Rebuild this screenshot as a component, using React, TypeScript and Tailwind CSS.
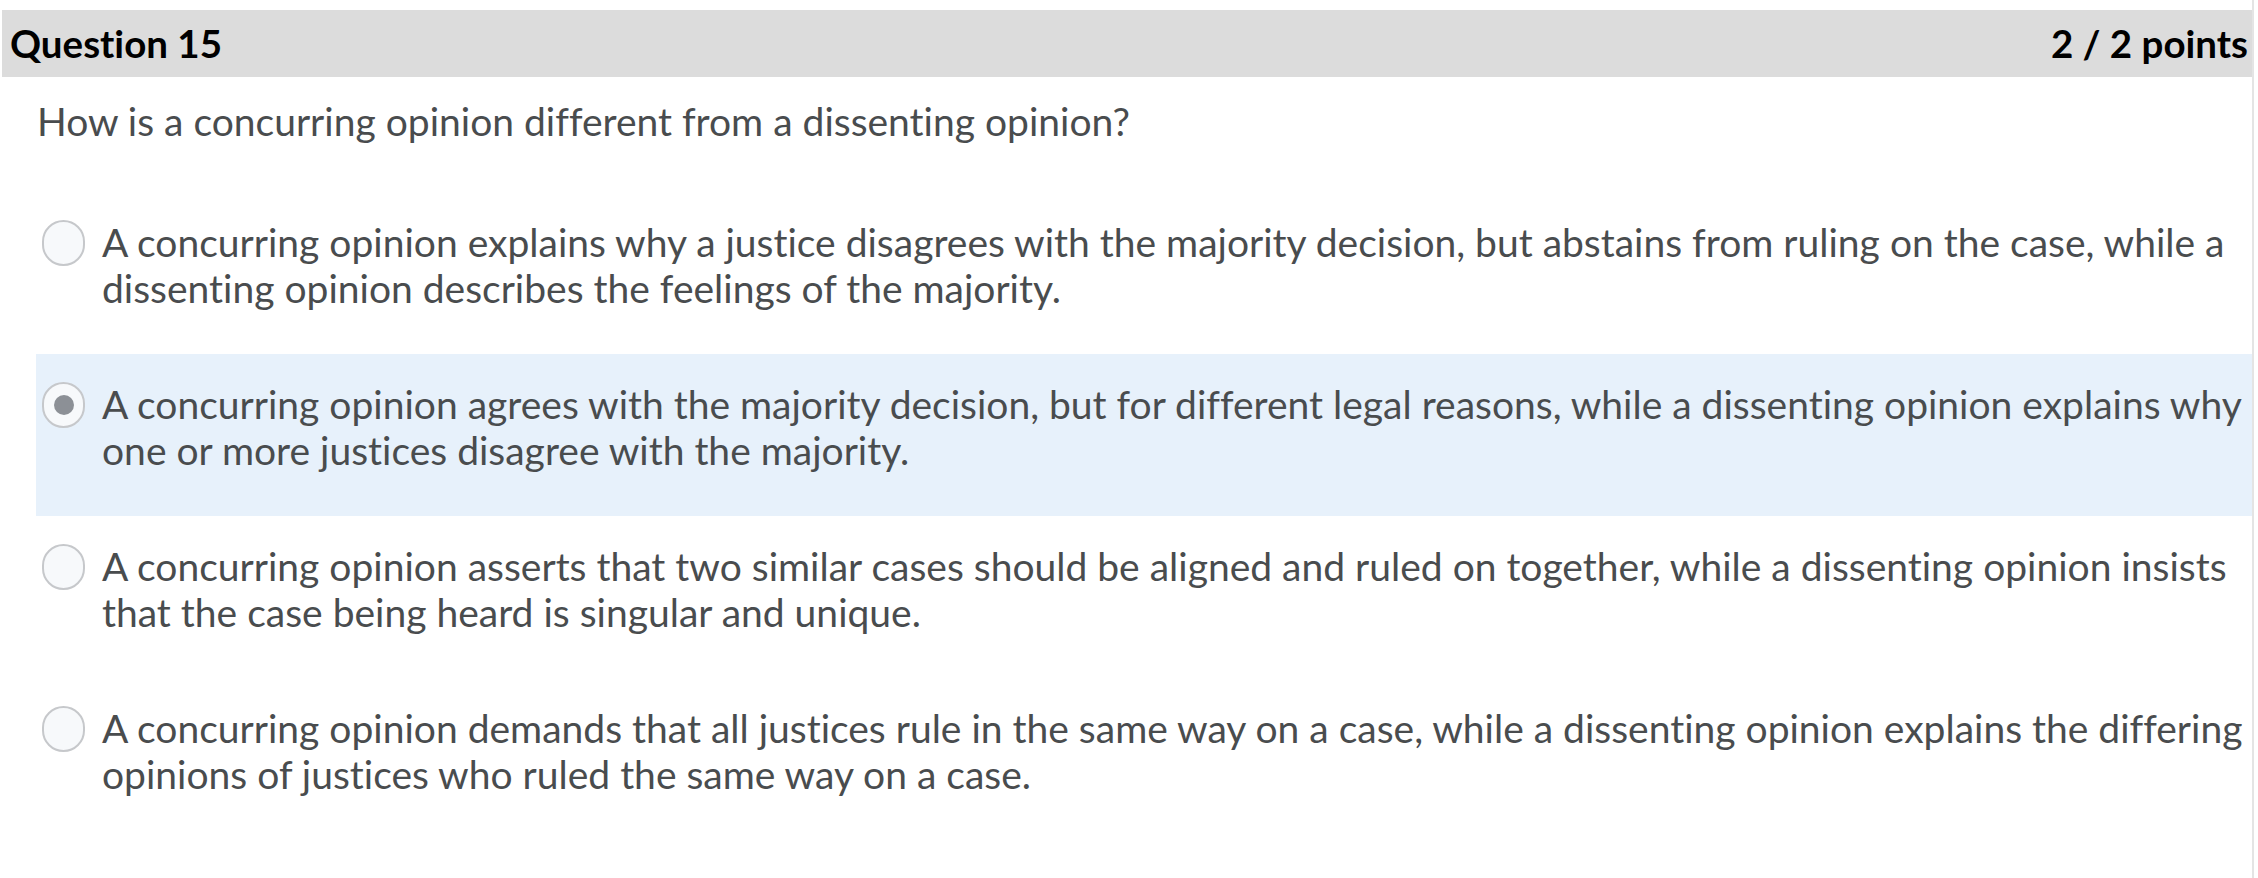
const options = [
  {
    text: "A concurring opinion explains why a justice disagrees with the majority decision, but abstains from ruling on the case, while a dissenting opinion describes the feelings of the majority.",
    selected: false,
  },
  {
    text: "A concurring opinion agrees with the majority decision, but for different legal reasons, while a dissenting opinion explains why one or more justices disagree with the majority.",
    selected: true,
  },
  {
    text: "A concurring opinion asserts that two similar cases should be aligned and ruled on together, while a dissenting opinion insists that the case being heard is singular and unique.",
    selected: false,
  },
  {
    text: "A concurring opinion demands that all justices rule in the same way on a case, while a dissenting opinion explains the differing opinions of justices who ruled the same way on a case.",
    selected: false,
  },
];

function Radio({ checked }: { checked: boolean }) {
  return (
    <div className="mt-[1px] flex h-[46px] w-[43px] shrink-0 items-center justify-center rounded-full border-2 border-[#c6c8cb] bg-[#f7f9fb]">
      {checked && <div className="h-[20px] w-[20px] rounded-full bg-[#8c9096]" />}
    </div>
  );
}

export default function App() {
  return (
    <div className="flex h-[878px] w-[2258px] bg-white font-['Lato',sans-serif] text-[#494c4e] [font-variant-ligatures:none]">
      <div className="ml-[2px] w-[2250px]">
        <div className="mt-[10px] flex h-[67px] items-center justify-between bg-[#dcdcdc] pl-[8px] pr-[4px] text-[38.5px] font-bold text-black">
          <span>Question 15</span>
          <span>2 / 2 points</span>
        </div>
        <p className="ml-[35px] mt-[21px] text-[39px] leading-[46px]">
          How is a concurring opinion different from a dissenting opinion?
        </p>
        <div className="ml-[34px] mt-[48px] flex flex-col">
          {options.map((o, i) => (
            <div
              key={i}
              className={
                "flex h-[162px] gap-[17px] pl-[6px] pr-[6px] pt-[27px] " +
                (o.selected ? "bg-[#e7f1fb]" : "")
              }
            >
              <Radio checked={o.selected} />
              <p className="text-[39px] leading-[46px]">{o.text}</p>
            </div>
          ))}
        </div>
      </div>
      <div className="w-[2px] bg-[#e4e4e4]" />
    </div>
  );
}
